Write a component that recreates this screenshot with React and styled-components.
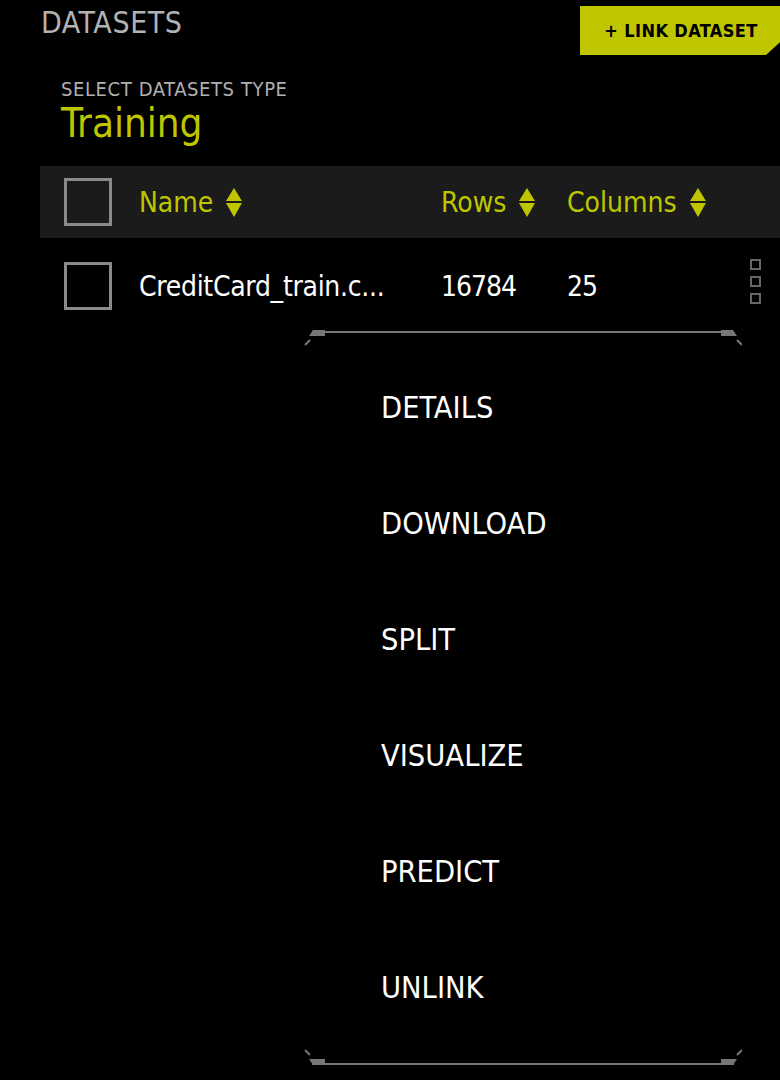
import React from "react";
import styled, { createGlobalStyle } from "styled-components";

const FONT = `"Liberation Sans Narrow", "DejaVu Sans Condensed", "Liberation Sans", sans-serif`;
const LIME = "#bfc600";

const Global = createGlobalStyle`
  html, body { margin: 0; padding: 0; background: #000; }
  body { font-family: ${FONT}; color: #fff; width: 780px; min-height: 1080px; overflow: hidden; }
`;

const Page = styled.div`
  position: relative;
  width: 780px;
  height: 1080px;
  padding-left: 40px;
  box-sizing: border-box;
  background: #000;
`;

const TopBar = styled.div`
  display: flex;
  justify-content: space-between;
  align-items: flex-start;
  height: 55px;
`;

const Title = styled.h1`
  margin: 8px 0 0 1px;
  font-family: ${FONT};
  font-weight: 400;
  font-size: 30px;
  line-height: 30px;
  color: #b2b2b2;
  letter-spacing: 0.6px;
`;

const LinkButton = styled.button`
  margin-top: 6px;
  width: 200px;
  height: 49px;
  border: none;
  background: ${LIME};
  color: #000;
  font-family: ${FONT};
  font-weight: 700;
  font-size: 18px;
  letter-spacing: 0.4px;
  padding: 0 0 0 2px;
  clip-path: polygon(0 0, 100% 0, 100% 74%, calc(100% - 14px) 100%, 0 100%);
  cursor: pointer;
`;

const TypeBlock = styled.div`
  margin-top: 24px;
  padding-left: 21px;
`;

const TypeLabel = styled.div`
  font-size: 20px;
  line-height: 20px;
  color: #b0b0b0;
  letter-spacing: 0.6px;
`;

const TypeValue = styled.div`
  margin-top: 4px;
  font-size: 40px;
  line-height: 40px;
  color: ${LIME};
`;

const Table = styled.div`
  margin-top: 23px;
`;

const Row = styled.div`
  display: grid;
  grid-template-columns: 75px 302px 126px 1fr 12px;
  align-items: center;
  padding: 0 18px 0 24px;
  height: ${(p) => (p.$head ? 72 : 96)}px;
  background: ${(p) => (p.$head ? "#1b1b1b" : "transparent")};
`;

const Check = styled.span`
  display: block;
  width: 48px;
  height: 48px;
  box-sizing: border-box;
  border: 3px solid #8a8a8a;
`;

const HeadCell = styled.div`
  display: flex;
  align-items: center;
  gap: 13px;
  font-size: 28px;
  color: ${LIME};
`;

const Cell = styled.div`
  font-size: 28px;
  letter-spacing: ${(p) => p.$ls || "0"};
  color: #fff;
  white-space: nowrap;
`;

const Kebab = styled.div`
  align-self: start;
  margin-top: 21px;
  display: flex;
  flex-direction: column;
  gap: 6px;
`;

const Dot = styled.span`
  display: block;
  width: 11px;
  height: 11px;
  box-sizing: border-box;
  border: 2px solid #666;
`;

const Menu = styled.div`
  position: absolute;
  left: 304px;
  top: 326px;
  width: 438px;
  background: #000;
  display: flex;
  flex-direction: column;
`;

const MenuList = styled.ul`
  list-style: none;
  margin: 4px 0 0;
  padding: 0;
`;

const MenuItem = styled.li`
  height: 116px;
  line-height: 116px;
  padding-left: 77px;
  font-size: 30.5px;
  color: #fff;
  cursor: pointer;
`;

const SortIcon = () => (
  <svg width="16" height="29" viewBox="0 0 16 29">
    <polygon points="8,0 16,13 0,13" fill={LIME} />
    <polygon points="0,15 16,15 8,29" fill={LIME} />
  </svg>
);

const BracketTop = () => (
  <svg width="438" height="20" viewBox="0 0 438 20" style={{ display: "block" }}>
    <rect x="8" y="5" width="422" height="2" fill="#777" />
    <polygon points="9,4 21,4 21,10 5,10" fill="#777" />
    <polygon points="417,4 429,4 433,10 417,10" fill="#777" />
    <line x1="1" y1="19" x2="6" y2="14" stroke="#777" strokeWidth="2" />
    <line x1="433" y1="14" x2="438" y2="19" stroke="#777" strokeWidth="2" />
  </svg>
);

const BracketBottom = () => (
  <svg width="438" height="24" viewBox="0 0 438 24" style={{ display: "block" }}>
    <rect x="8" y="17" width="422" height="2" fill="#777" />
    <polygon points="5,13 21,13 21,19 9,19" fill="#777" />
    <polygon points="417,13 433,13 429,19 417,19" fill="#777" />
    <line x1="1" y1="4" x2="6" y2="9" stroke="#777" strokeWidth="2" />
    <line x1="433" y1="9" x2="438" y2="4" stroke="#777" strokeWidth="2" />
  </svg>
);

const items = ["DETAILS", "DOWNLOAD", "SPLIT", "VISUALIZE", "PREDICT", "UNLINK"];

export default function App() {
  return (
    <>
      <Global />
      <Page>
        <TopBar>
          <Title>DATASETS</Title>
          <LinkButton>+ LINK DATASET</LinkButton>
        </TopBar>
        <TypeBlock>
          <TypeLabel>SELECT DATASETS TYPE</TypeLabel>
          <TypeValue>Training</TypeValue>
        </TypeBlock>
        <Table>
          <Row $head>
            <Check />
            <HeadCell>
              Name <SortIcon />
            </HeadCell>
            <HeadCell>
              Rows <SortIcon />
            </HeadCell>
            <HeadCell>
              Columns <SortIcon />
            </HeadCell>
            <span />
          </Row>
          <Row>
            <Check />
            <Cell $ls="-0.3px">CreditCard_train.c...</Cell>
            <Cell $ls="-1px">16784</Cell>
            <Cell $ls="-1px">25</Cell>
            <Kebab>
              <Dot />
              <Dot />
              <Dot />
            </Kebab>
          </Row>
        </Table>
        <Menu>
          <BracketTop />
          <MenuList>
            {items.map((t) => (
              <MenuItem key={t}>{t}</MenuItem>
            ))}
          </MenuList>
          <BracketBottom />
        </Menu>
      </Page>
    </>
  );
}
